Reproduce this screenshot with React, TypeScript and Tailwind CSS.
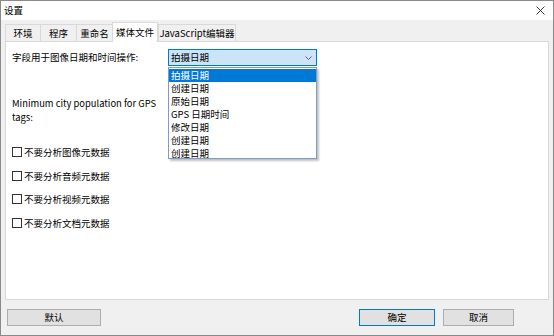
import React from "react";

const font = { fontFamily: '"Noto Sans CJK SC", "Noto Sans", sans-serif' };

function Tab({ label, w, selected, last }: { label: string; w: string; selected?: boolean; last?: boolean }) {
  if (selected) {
    return (
      <div className={`${w} h-[20px] -mb-px bg-white border border-b-0 border-[#d9d9d9] relative z-10 flex items-center justify-center text-[9.5px] text-black`}>
        {label}
      </div>
    );
  }
  return (
    <div className={`${w} h-[17px] bg-[#f0f0f0] border-t border-l ${last ? "border-r" : ""} border-[#d9d9d9] flex items-center justify-center text-[9.5px] text-black`}>
      {label}
    </div>
  );
}

function Check({ label }: { label: string }) {
  return (
    <div className="flex items-center h-[14px]">
      <div className="w-[10px] h-[10px] border border-[#333333] bg-white mr-[2px]" />
      <span className="text-[9.5px] leading-[14px] text-black">{label}</span>
    </div>
  );
}

export default function App() {
  const items = ["拍摄日期", "创建日期", "原始日期", "GPS 日期时间", "修改日期", "创建日期", "创建日期"];
  return (
    <div style={font} className="w-[554px] h-[336px] border border-[#8a8a8a] bg-[#f0f0f0] flex flex-col overflow-hidden">
      <div className="h-[19px] bg-white flex items-center justify-between pl-[3px] pr-[8px]">
        <span className="text-[9.5px] text-black leading-none">设置</span>
        <svg width="9" height="9" viewBox="0 0 9 9">
          <path d="M0.5 0.5 L8.5 8.5 M8.5 0.5 L0.5 8.5" stroke="#222" strokeWidth="0.9" fill="none" />
        </svg>
      </div>
      <div className="h-[20px] mt-px pl-[4px] flex items-end">
        <Tab label="环境" w="w-[35px]" />
        <Tab label="程序" w="w-[36px]" />
        <Tab label="重命名" w="w-[36px]" />
        <Tab label="媒体文件" w="w-[46px]" selected />
        <Tab label="JavaScript编辑器" w="w-[78px]" last />
      </div>
      <div className="mx-[4px] h-[259px] bg-white border border-[#d9d9d9] relative">
        <div className="flex items-center mt-[7px] pl-[6px]">
          <div className="w-[156px] text-[9.5px] text-black">字段用于图像日期和时间操作:</div>
          <div className="w-[149px] h-[17px] bg-[#cce4f7] border border-[#0078d7] flex items-center justify-between pl-[2px] pr-[4px]">
            <span className="text-[9.5px] text-black">拍摄日期</span>
            <svg width="7" height="4" viewBox="0 0 7 4">
              <path d="M0.5 0.5 L3.5 3.5 L6.5 0.5" stroke="#555" strokeWidth="0.9" fill="none" />
            </svg>
          </div>
        </div>
        <div className="pl-[6px] mt-[30px] text-[9.4px] leading-[14px] text-black">
          <div>Minimum city population for GPS</div>
          <div>tags:</div>
        </div>
        <div className="pl-[6px] mt-[21px] flex flex-col gap-[9.7px]">
          <Check label="不要分析图像元数据" />
          <Check label="不要分析音频元数据" />
          <Check label="不要分析视频元数据" />
          <Check label="不要分析文档元数据" />
        </div>
        <div className="absolute left-[162px] top-[25px] w-[149px] h-[92px] bg-white border border-[#7a9cc6] shadow-[2px_2px_2px_rgba(0,0,0,0.25)] z-20 py-px">
          {items.map((it, i) => (
            <div
              key={i}
              className={`h-[13px] leading-[13px] pl-[2px] text-[9.5px] ${i === 0 ? "bg-[#0078d7] text-white" : "text-black"}`}
            >
              {it}
            </div>
          ))}
        </div>
      </div>
      <div className="flex-1 flex items-center pl-[6px] pr-[39px] pb-[1px]">
        <button className="w-[94px] h-[17px] bg-[#e1e1e1] border border-[#adadad] text-[9.5px] text-black flex items-center justify-center">默认</button>
        <div className="flex-1" />
        <button className="w-[76px] h-[17px] bg-[#e1e1e1] border border-[#0078d7] text-[9.5px] text-black flex items-center justify-center">确定</button>
        <button className="w-[71px] h-[17px] ml-[8px] bg-[#e1e1e1] border border-[#adadad] text-[9.5px] text-black flex items-center justify-center">取消</button>
      </div>
    </div>
  );
}
